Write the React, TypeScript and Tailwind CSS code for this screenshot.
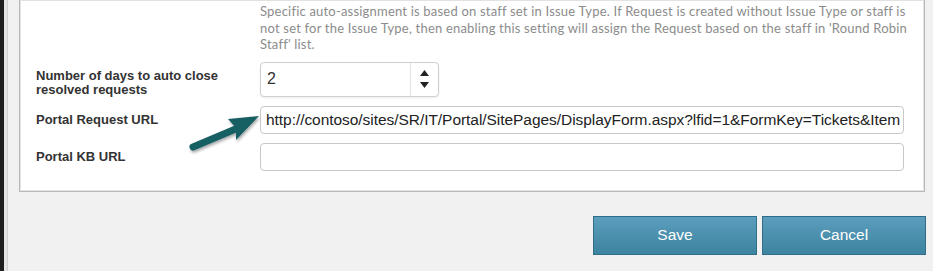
import React from "react";

export default function App() {
  return (
    <div className="relative flex w-[933px] h-[271px] overflow-hidden bg-[#f1f1f1]">
      {/* left window edge */}
      <div className="w-[4px] h-full bg-[#1e1e1e]" />
      <div className="w-[4px] h-full bg-[#e4e4e4] border-r border-[#d0d0d0]" />
      <div className="flex flex-col flex-1 pl-[11px]">
        {/* panel */}
        <div className="w-[906px] border border-t-0 border-[#b9b9b9] bg-white shadow-[inset_0_0_0_1px_#e2e2e2] pl-[16px] pr-[20px] pt-[3px] pb-[20px]">
          <div className="grid grid-cols-[224px_1fr] gap-y-[9px]">
            <div />
            <p
              className="mr-[-4px] text-[13px] leading-[16.5px] text-[#8c8c8c] tracking-[0.2px]"
              style={{ fontFamily: "Lato, 'Open Sans', sans-serif" }}
            >
              Specific auto-assignment is based on staff set in Issue Type. If Request is created without Issue Type or staff is not set for the Issue Type, then enabling this setting will assign the Request based on the staff in 'Round Robin Staff' list.
            </p>

            <div
              className="pt-[7px] text-[13px] leading-[14px] font-bold text-[#333]"
              style={{ fontFamily: "'Liberation Sans', Arial, sans-serif" }}
            >
              Number of days to auto close
              <br />
              resolved requests
            </div>
            <div className="flex">
              <div className="flex w-[179px] h-[35px] rounded-[4px] border border-[#cfcfcf] shadow-[0_1px_2px_rgba(0,0,0,0.08)] bg-white">
                <div
                  className="flex-1 flex items-center pl-[6px] text-[16px] text-[#333]"
                  style={{ fontFamily: "'Liberation Sans', Arial, sans-serif" }}
                >
                  2
                </div>
                <div className="w-[28px] border-l border-[#e2e2e2] flex flex-col items-center justify-center gap-[6px]">
                  <svg width="9" height="6" viewBox="0 0 9 6">
                    <path d="M4.5 0 L9 6 L0 6 Z" fill="#222" />
                  </svg>
                  <svg width="9" height="6" viewBox="0 0 9 6">
                    <path d="M0 0 L9 0 L4.5 6 Z" fill="#222" />
                  </svg>
                </div>
              </div>
            </div>

            <div
              className="flex items-center pt-[1px] text-[13px] font-bold text-[#333]"
              style={{ fontFamily: "'Liberation Sans', Arial, sans-serif" }}
            >
              Portal Request URL
            </div>
            <div className="h-[28px] rounded-[4px] border border-[#c8c8c8] bg-white flex items-center pl-[5px] overflow-hidden">
              <span
                className="whitespace-nowrap text-[15.5px] text-[#222] tracking-[-0.05px]"
                style={{ fontFamily: "'Liberation Sans', Arial, sans-serif" }}
              >
                http://contoso/sites/SR/IT/Portal/SitePages/DisplayForm.aspx?lfid=1&amp;FormKey=Tickets&amp;Item
              </span>
            </div>

            <div
              className="flex items-center pt-[1px] text-[13px] font-bold text-[#333]"
              style={{ fontFamily: "'Liberation Sans', Arial, sans-serif" }}
            >
              Portal KB URL
            </div>
            <div className="h-[28px] rounded-[4px] border border-[#c8c8c8] bg-white" />
          </div>
        </div>

        {/* buttons */}
        <div className="flex justify-end gap-[5px] pt-[24px] w-[907px]">
          <button
            className="w-[164px] h-[39px] border border-[#2f6d88] bg-gradient-to-b from-[#5b9dbd] to-[#3c849f] text-white text-[15.5px]"
            style={{ fontFamily: "'Liberation Sans', Arial, sans-serif" }}
          >
            Save
          </button>
          <button
            className="w-[164px] h-[39px] border border-[#2f6d88] bg-gradient-to-b from-[#5b9dbd] to-[#3c849f] text-white text-[15.5px]"
            style={{ fontFamily: "'Liberation Sans', Arial, sans-serif" }}
          >
            Cancel
          </button>
        </div>
      </div>

      {/* annotation arrow */}
      <svg
        className="absolute left-[182px] top-[108px]"
        width="90"
        height="50"
        viewBox="0 0 90 50"
      >
        <defs>
          <filter id="sh" x="-20%" y="-20%" width="140%" height="160%">
            <feDropShadow dx="1" dy="2" stdDeviation="1.5" floodColor="#000" floodOpacity="0.35" />
          </filter>
        </defs>
        <g filter="url(#sh)">
          <line x1="11" y1="39" x2="56" y2="20" stroke="#195e63" strokeWidth="7" strokeLinecap="round" />
          <path d="M77 8 L46 11 L54 20 L54 32 Z" fill="#195e63" />
        </g>
      </svg>
    </div>
  );
}
